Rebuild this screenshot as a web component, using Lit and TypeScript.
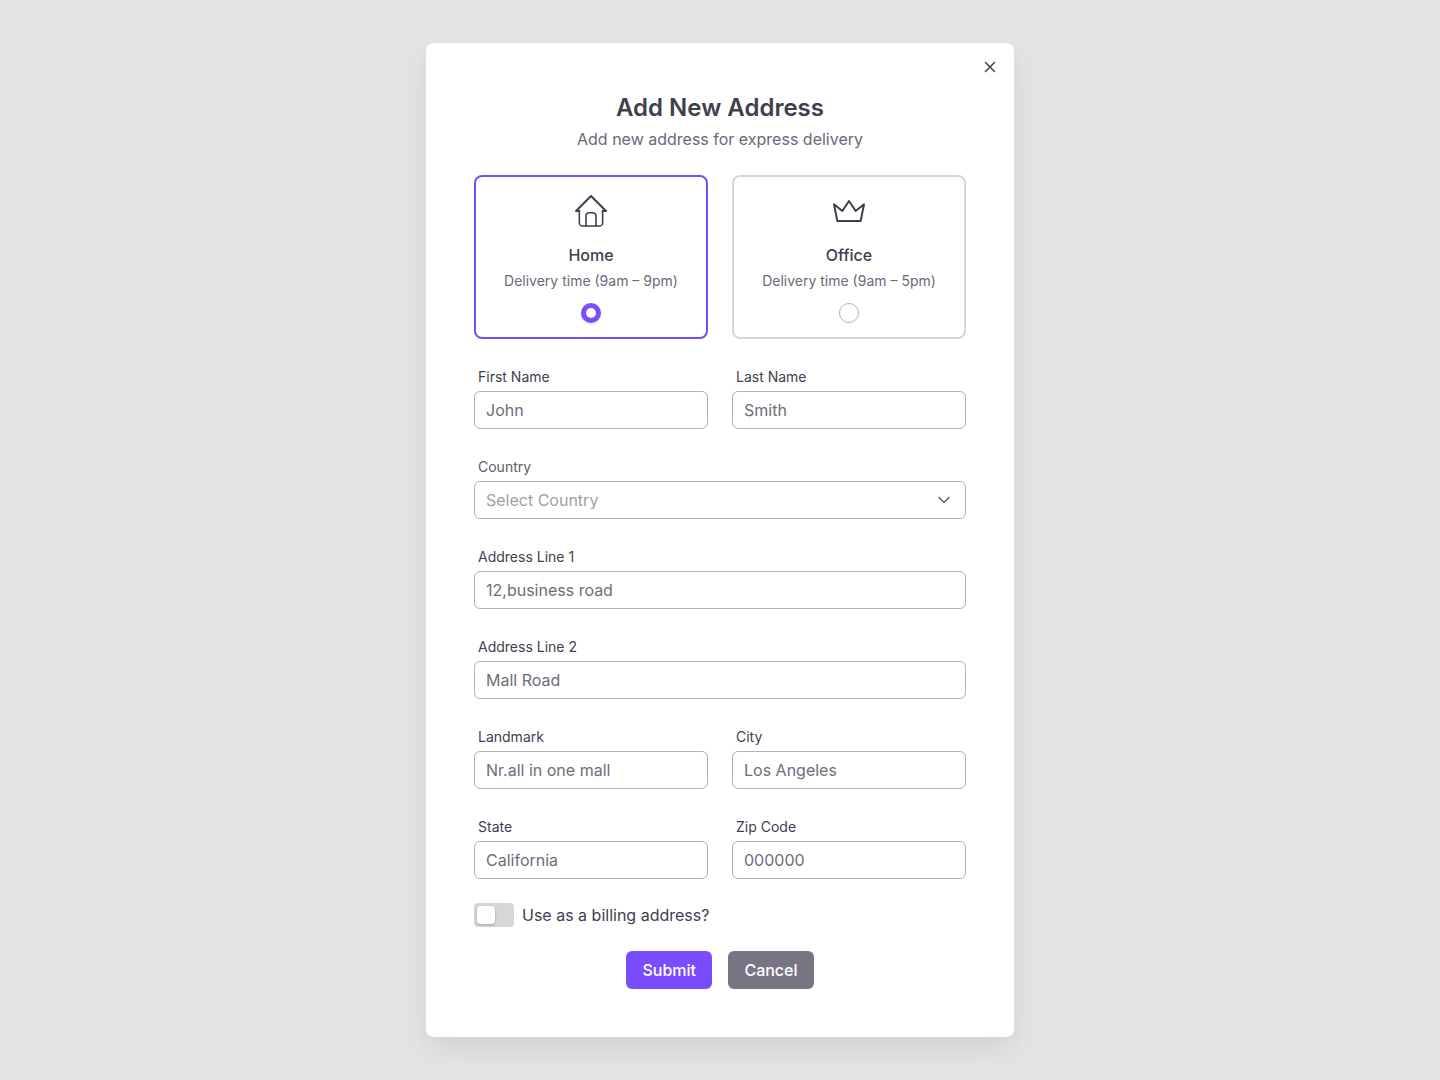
import { LitElement, html, css, svg } from "lit";
import { customElement, property, state } from "lit/decorators.js";

const homeIcon = svg`
  <path d="M5 12H3l9-9 9 9h-2"></path>
  <path class="thin" d="M5 12v7a2 2 0 0 0 2 2h10a2 2 0 0 0 2-2v-7"></path>
  <path class="thin" d="M9 21v-6a2 2 0 0 1 2-2h2a2 2 0 0 1 2 2v6"></path>`;

const crownIcon = svg`<path d="m12 6 4 6 5-4-2 10H5L3 8l5 4z"></path>`;

@customElement("address-option")
class AddressOption extends LitElement {
  @property() title = "";
  @property() hint = "";
  @property() icon = "home";
  @property({ type: Boolean }) checked = false;

  static styles = css`
    :host { display: block; flex: 1; }
    .option {
      box-sizing: border-box;
      height: 164px;
      padding: 14px;
      border: 2px solid #d7d7d9;
      border-radius: 8px;
      display: flex;
      flex-direction: column;
      align-items: center;
      cursor: pointer;
    }
    .option.checked { border-color: #794dff; }
    .icon {
      width: 40px;
      height: 40px;
      fill: none;
      stroke: #403e50;
      stroke-width: 1.2;
      stroke-linecap: round;
      stroke-linejoin: round;
    }
    .thin { stroke-width: 0.95; }
    .title { margin-top: 12px; font-size: 16px; font-weight: 500; line-height: 24px; color: #403f50; }
    .hint { margin-top: 4px; font-size: 14px; line-height: 20px; color: #6c6a78; white-space: nowrap; }
    .radio {
      box-sizing: border-box;
      width: 20px;
      height: 20px;
      margin-top: 12px;
      border: 1px solid #b2b1b7;
      border-radius: 50%;
      background: #fff;
    }
    .checked .radio { border: 5px solid #794dff; box-shadow: 0 1px 2px rgba(64, 62, 80, 0.2); }
  `;

  render() {
    return html`<div class="option ${this.checked ? "checked" : ""}">
      <svg class="icon" viewBox="0 0 24 24">${this.icon === "home" ? homeIcon : crownIcon}</svg>
      <span class="title">${this.title}</span>
      <span class="hint">${this.hint}</span>
      <span class="radio"></span>
    </div>`;
  }
}

@customElement("form-field")
class FormField extends LitElement {
  @property() label = "";
  @property() placeholder = "";
  @property({ type: Boolean }) select = false;

  static styles = css`
    :host { display: block; flex: 1; }
    .label { display: block; padding: 4px; font-size: 14px; line-height: 20px; color: #403f50; }
    .label.select { color: #5d5b69; }
    .control {
      box-sizing: border-box;
      display: flex;
      align-items: center;
      justify-content: space-between;
      width: 100%;
      height: 38px;
      padding: 0 11px;
      border: 1px solid #b2b1b7;
      border-radius: 6px;
      background: #fff;
      font: inherit;
      font-size: 16px;
      line-height: 24px;
      outline: none;
    }
    .control::placeholder { color: #6f6d79; opacity: 1; }
    .control.select { color: #a09fa7; text-align: left; }
    .chevron { width: 20px; height: 20px; fill: none; stroke: #686674; stroke-width: 2; stroke-linecap: round; stroke-linejoin: round; }
  `;

  render() {
    return html`<label class="label ${this.select ? "select" : ""}">${this.label}</label>
      ${this.select
        ? html`<button class="control select" type="button">
            <span>${this.placeholder}</span>
            <svg class="chevron" viewBox="0 0 24 24"><path d="m6 9 6 6 6-6"></path></svg>
          </button>`
        : html`<input class="control" type="text" placeholder=${this.placeholder} />`}`;
  }
}

@customElement("app-root")
class AppRoot extends LitElement {
  @state() private selected = "home";
  @state() private billing = false;

  static styles = css`
    :host {
      display: flex;
      align-items: center;
      justify-content: center;
      height: 1080px;
      background: #e4e4e4;
      font-family: Inter, "Liberation Sans", sans-serif;
      color: #403f50;
    }
    .dialog {
      position: relative;
      box-sizing: border-box;
      width: 588px;
      padding: 48px;
      border-radius: 8px;
      background: #fff;
      box-shadow: 0 12px 28px -2px rgba(64, 64, 66, 0.12);
      display: flex;
      flex-direction: column;
      gap: 24px;
    }
    .close {
      position: absolute;
      top: 12px;
      right: 12px;
      width: 24px;
      height: 24px;
      padding: 3px;
      border: 0;
      background: none;
    }
    .close-icon { display: block; width: 18px; height: 18px; fill: none; stroke: #403f50; stroke-width: 2; stroke-linecap: round; }
    .header { text-align: center; }
    .heading { margin: 0; padding-top: 1px; font-size: 24px; font-weight: 600; line-height: 32px; }
    .subtitle { margin: 3px 0 0; font-size: 16px; line-height: 24px; color: #6a6876; }
    .row { display: flex; gap: 24px; }
    .billing { display: flex; align-items: center; gap: 8px; font-size: 16px; line-height: 24px; }
    .switch {
      box-sizing: border-box;
      display: flex;
      width: 40px;
      height: 24px;
      padding: 3px;
      border-radius: 4px;
      background: #d7d7d9;
    }
    .switch.on { justify-content: flex-end; background: #794dff; }
    .knob { width: 18px; height: 18px; border-radius: 4px; background: #fff; box-shadow: 0 1px 3px rgba(64, 62, 80, 0.35); }
    .actions { display: flex; justify-content: center; gap: 16px; }
    .button {
      height: 38px;
      padding: 0 16.2px;
      border: 0;
      border-radius: 6px;
      background: #794dff;
      color: #fff;
      font: inherit;
      font-size: 16px;
      font-weight: 500;
    }
    .button.secondary { background: #787484; }
  `;

  render() {
    return html`<div class="dialog">
      <button class="close" aria-label="Close">
        <svg class="close-icon" viewBox="0 0 24 24"><path d="M18 6 6 18M6 6l12 12"></path></svg>
      </button>
      <div class="header">
        <h3 class="heading">Add New Address</h3>
        <p class="subtitle">Add new address for express delivery</p>
      </div>
      <div class="row">
        <address-option icon="home" title="Home" hint="Delivery time (9am – 9pm)"
          ?checked=${this.selected === "home"} @click=${() => (this.selected = "home")}></address-option>
        <address-option icon="crown" title="Office" hint="Delivery time (9am – 5pm)"
          ?checked=${this.selected === "office"} @click=${() => (this.selected = "office")}></address-option>
      </div>
      <div class="row">
        <form-field label="First Name" placeholder="John"></form-field>
        <form-field label="Last Name" placeholder="Smith"></form-field>
      </div>
      <form-field select label="Country" placeholder="Select Country"></form-field>
      <form-field label="Address Line 1" placeholder="12,business road"></form-field>
      <form-field label="Address Line 2" placeholder="Mall Road"></form-field>
      <div class="row">
        <form-field label="Landmark" placeholder="Nr.all in one mall"></form-field>
        <form-field label="City" placeholder="Los Angeles"></form-field>
      </div>
      <div class="row">
        <form-field label="State" placeholder="California"></form-field>
        <form-field label="Zip Code" placeholder="000000"></form-field>
      </div>
      <div class="billing" @click=${() => (this.billing = !this.billing)}>
        <span class="switch ${this.billing ? "on" : ""}"><span class="knob"></span></span>
        <span>Use as a billing address?</span>
      </div>
      <div class="actions">
        <button class="button">Submit</button>
        <button class="button secondary">Cancel</button>
      </div>
    </div>`;
  }
}
